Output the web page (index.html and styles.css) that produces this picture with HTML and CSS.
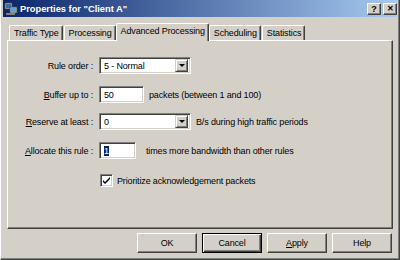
FILE: index.html
```html
<!DOCTYPE html>
<html>
<head>
<meta charset="utf-8">
<link rel="stylesheet" href="styles.css">
</head>
<body>
<div class="window">
  <div class="titlebar">
    <svg class="appicon" width="14" height="14" viewBox="0 0 14 14">
      <rect x="1" y="1" width="7" height="6" fill="#c0c0c0" stroke="#404040" stroke-width="0.8"/>
      <rect x="2" y="2" width="5" height="4" fill="#3a6ea5"/>
      <rect x="6" y="5" width="7" height="6" fill="#c0c0c0" stroke="#404040" stroke-width="0.8"/>
      <rect x="7" y="6" width="5" height="4" fill="#5fa0e0"/>
      <rect x="2" y="11" width="9" height="2" fill="#808080"/>
    </svg>
    <span class="title">Properties for "Client A"</span>
    <div class="capbtns">
      <span class="capbtn">?</span>
      <span class="capbtn close">&#x2715;</span>
    </div>
  </div>
  <div class="body">
    <div class="tabs">
      <span class="tab">Traffic Type</span>
      <span class="tab">Processing</span>
      <span class="tab active">Advanced Processing</span>
      <span class="tab">Scheduling</span>
      <span class="tab">Statistics</span>
    </div>
    <div class="panel">
      <div class="form">
        <div class="row r1">
          <span class="label">Rule order :</span>
          <div class="combo wide"><span class="val">5 - Normal</span><span class="drop"><span class="tri"></span></span></div>
        </div>
        <div class="row r2">
          <span class="label"><u>B</u>uffer up to :</span>
          <div class="field buf"><span class="val">50</span></div>
          <span class="after">packets (between 1 and 100)</span>
        </div>
        <div class="row r3">
          <span class="label"><u>R</u>eserve at least :</span>
          <div class="combo wide"><span class="val">0</span><span class="drop"><span class="tri"></span></span></div>
          <span class="after">B/s during high traffic periods</span>
        </div>
        <div class="row r4">
          <span class="label"><u>A</u>llocate this rule :</span>
          <div class="field alloc"><span class="val"><span class="sel">1</span></span></div>
          <span class="after far">times more bandwidth than other rules</span>
        </div>
        <div class="row r5">
          <span class="label"></span>
          <span class="check"><svg width="9" height="9" viewBox="0 0 9 9"><path d="M1 4 L3 6 L8 1 L8 3 L3 8 L1 6 Z" fill="#000"/></svg></span>
          <span class="checklabel">Prioritize acknowledgement packets</span>
        </div>
      </div>
    </div>
    <div class="buttons">
      <span class="btn">OK</span>
      <span class="btn default">Cancel</span>
      <span class="btn"><u>A</u>pply</span>
      <span class="btn">Help</span>
    </div>
  </div>
</div>
</body>
</html>
```
FILE: styles.css
```css
html, body {
  margin: 0;
  padding: 0;
  background: #d4d0c8;
}
body {
  font-family: "Liberation Sans", Arial, sans-serif;
  font-size: 9px;
  letter-spacing: -0.15px;
  color: #000;
}
.window {
  width: 400px;
  height: 260px;
  box-sizing: border-box;
  background: #d4d0c8;
  border-left: 1px solid #fff;
  border-right: 1px solid #404040;
  border-bottom: 1px solid #404040;
  box-shadow: inset -1px -1px #808080, inset 1px 0 #d4d0c8;
  padding: 0 2px 0 2px;
  display: flex;
  flex-direction: column;
}
.titlebar {
  height: 17px;
  background: linear-gradient(to right, #0a246a, #a6caf0);
  display: flex;
  align-items: center;
  padding-left: 1px;
  flex-shrink: 0;
}
.appicon {
  width: 14px;
  height: 14px;
  margin-right: 2px;
  flex-shrink: 0;
}
.title {
  color: #fff;
  font-weight: bold;
  font-size: 9.3px;
  letter-spacing: 0;
}
.capbtns {
  margin-left: auto;
  display: flex;
  gap: 2px;
  margin-right: 0;
}
.capbtn {
  width: 12px;
  height: 10px;
  box-sizing: content-box;
  border: 1px solid;
  border-color: #fff #404040 #404040 #fff;
  box-shadow: inset -1px -1px #808080;
  background: #d4d0c8;
  font-size: 9px;
  font-weight: bold;
  line-height: 10px;
  text-align: center;
  color: #000;
  letter-spacing: 0;
}
.capbtn.close {
  font-size: 8px;
}
.body {
  flex: 1;
  display: flex;
  flex-direction: column;
  padding: 5px 4px 0 4px;
}
.tabs {
  display: flex;
  align-items: flex-end;
  height: 18px;
  padding-left: 2px;
  position: relative;
  z-index: 1;
}
.tab {
  height: 15px;
  box-sizing: border-box;
  padding: 2px 3px 0 4px;
  border-top: 1px solid #fff;
  border-left: 1px solid #fff;
  border-right: 1px solid #404040;
  box-shadow: inset -1px 0 #808080;
  border-radius: 2px 2px 0 0;
  margin-right: 1px;
  background: #d4d0c8;
  white-space: nowrap;
}
.tab.active {
  height: 18px;
  margin-left: -1px;
  margin-right: 0;
  padding: 2px 3px 0 4px;
  margin-bottom: -1px;
}
.panel {
  height: 189px;
  box-sizing: border-box;
  border-top: 1px solid #fff;
  border-left: 1px solid #fff;
  border-right: 1px solid #404040;
  border-bottom: 1px solid #404040;
  box-shadow: inset -1px -1px #808080;
  padding-top: 16px;
}
.form {
  display: flex;
  flex-direction: column;
}
.row {
  display: flex;
  align-items: center;
  height: 17px;
}
.r2 { margin-top: 12px; }
.r3 { margin-top: 10px; }
.r4 { margin-top: 12px; }
.r5 { margin-top: 15px; height: 13px; }
.label {
  width: 85px;
  text-align: right;
  margin-right: 6px;
  flex-shrink: 0;
  white-space: nowrap;
}
.combo, .field {
  height: 17px;
  box-sizing: border-box;
  border: 1px solid;
  border-color: #808080 #fff #fff #808080;
  box-shadow: inset 1px 1px #404040, inset -1px -1px #d4d0c8;
  background: #fff;
  display: flex;
  align-items: center;
  padding: 2px;
}
.wide { width: 92px; }
.buf { width: 45px; }
.alloc { width: 37px; }
.val {
  flex: 1;
  padding-left: 2px;
  white-space: nowrap;
}
.sel {
  background: #0a246a;
  color: #fff;
}
.drop {
  width: 13px;
  height: 13px;
  box-sizing: border-box;
  background: #d4d0c8;
  border: 1px solid;
  border-color: #d4d0c8 #404040 #404040 #d4d0c8;
  box-shadow: inset 1px 1px #fff, inset -1px -1px #808080;
  display: flex;
  align-items: center;
  justify-content: center;
}
.tri {
  width: 0;
  height: 0;
  border-left: 3px solid transparent;
  border-right: 3px solid transparent;
  border-top: 3px solid #000;
}
.after {
  margin-left: 5px;
  white-space: nowrap;
}
.after.far { margin-left: 10px; }
.check {
  width: 13px;
  height: 13px;
  box-sizing: border-box;
  border: 1px solid;
  border-color: #808080 #fff #fff #808080;
  box-shadow: inset 1px 1px #404040, inset -1px -1px #d4d0c8;
  background: #fff;
  display: flex;
  align-items: center;
  justify-content: center;
  margin-left: 1px;
}
.checklabel {
  margin-left: 4px;
  white-space: nowrap;
}
.buttons {
  display: flex;
  justify-content: flex-end;
  gap: 5px;
  padding-top: 4px;
  padding-right: 1px;
}
.btn {
  width: 60px;
  height: 20px;
  box-sizing: border-box;
  border: 1px solid;
  border-color: #fff #404040 #404040 #fff;
  box-shadow: inset -1px -1px #808080;
  background: #d4d0c8;
  display: flex;
  align-items: center;
  justify-content: center;
}
.btn.default {
  border-color: #000;
  box-shadow: inset 1px 1px #fff, inset -1px -1px #404040, inset -2px -2px #808080;
}
u {
  text-decoration: underline;
  text-underline-offset: 1px;
}
```
